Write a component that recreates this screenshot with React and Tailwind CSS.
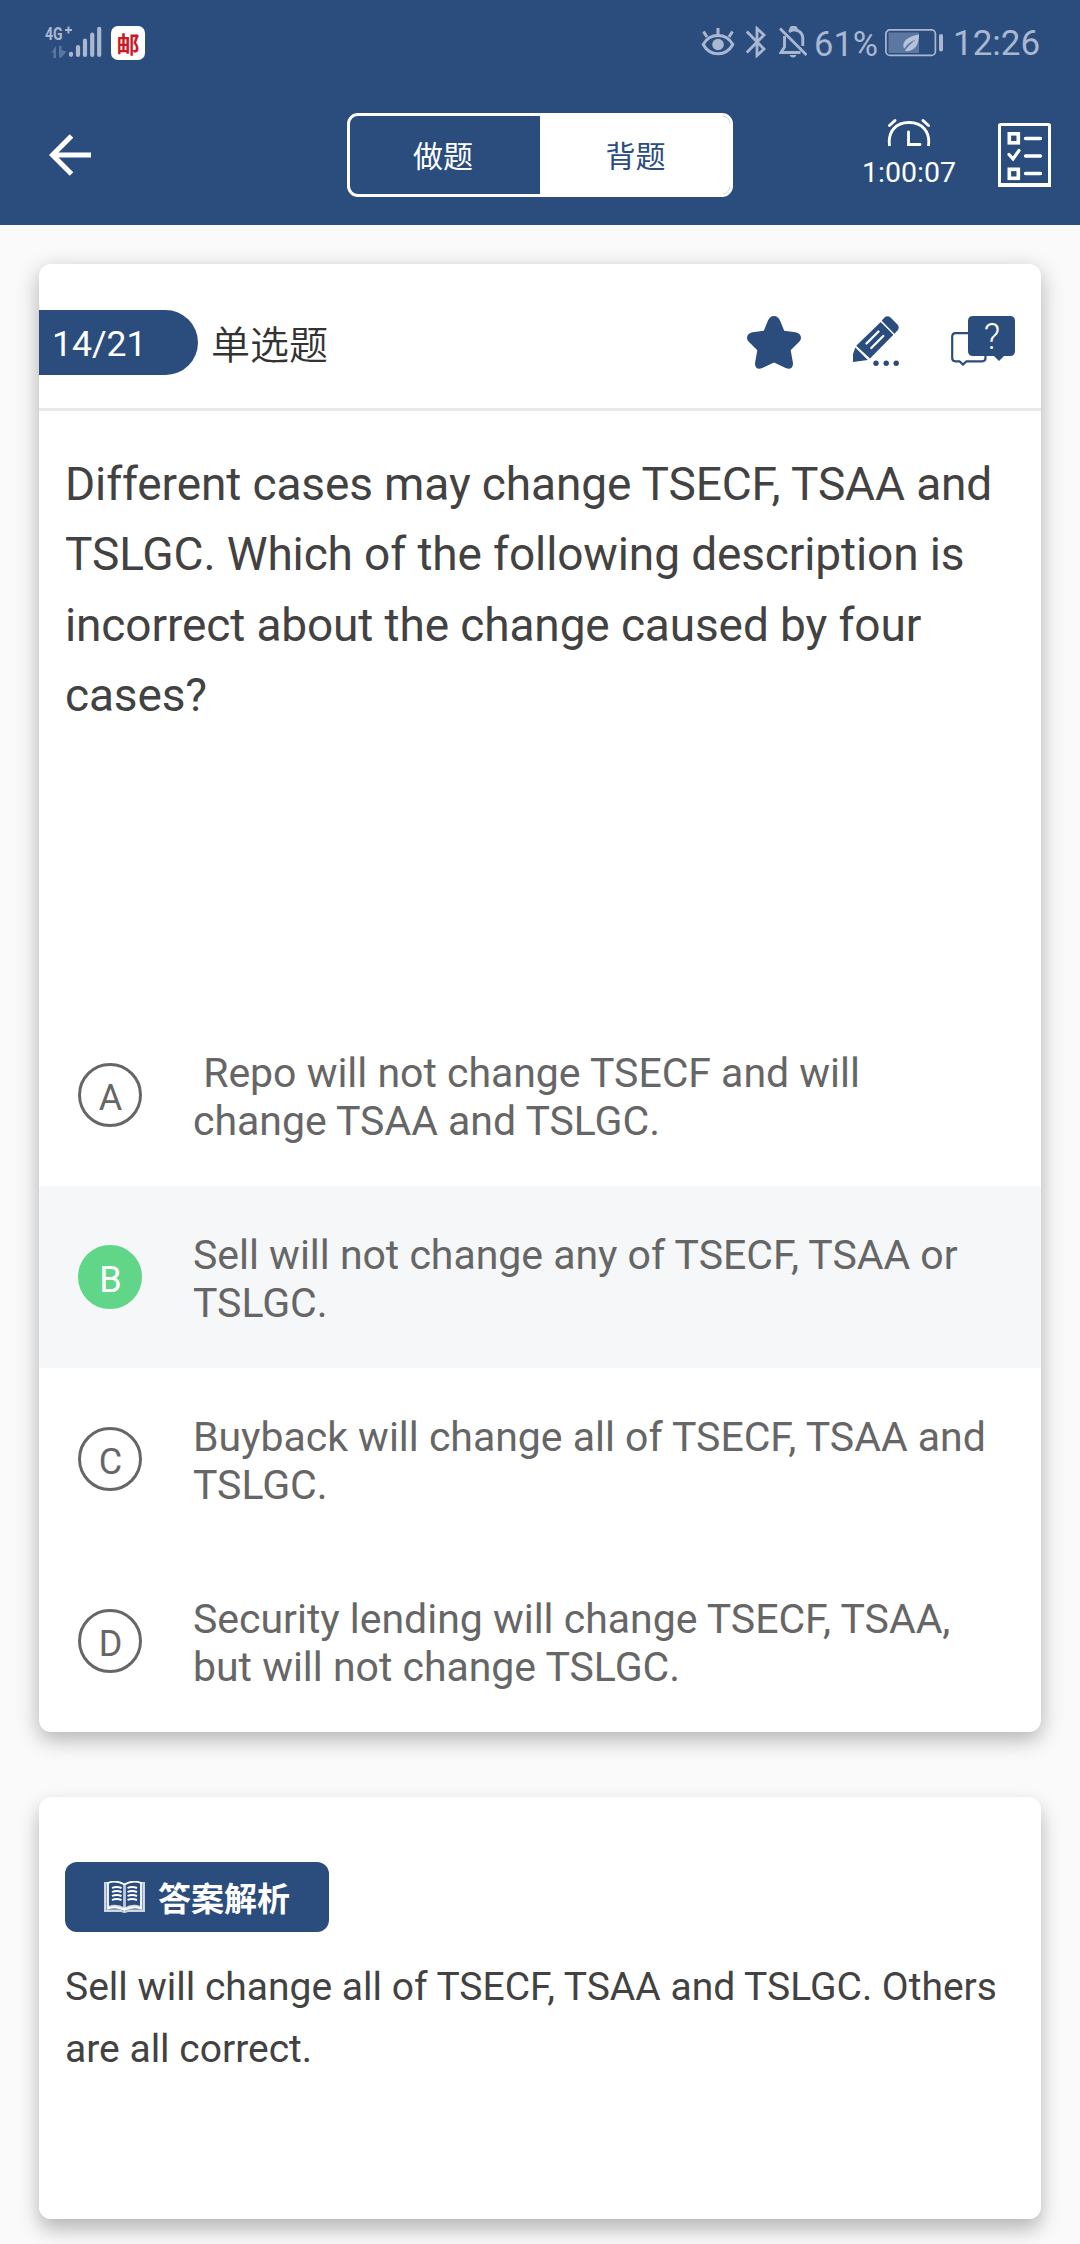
import React from "react";

const STATUS = "#a9b7d0";
const NAVY = "#2b4d7e";

const options = [
  { key: "A", lines: ["\u00a0Repo will not change TSECF and will", "change TSAA and TSLGC."] },
  { key: "B", lines: ["Sell will not change any of TSECF, TSAA or", "TSLGC."], selected: true },
  { key: "C", lines: ["Buyback will change all of TSECF, TSAA and", "TSLGC."] },
  { key: "D", lines: ["Security lending will change TSECF, TSAA,", "but will not change TSLGC."] },
];

function Lines({ lines }) {
  return lines.map((line) => (
    <span key={line} className="block whitespace-nowrap">{line}</span>
  ));
}

function Signal() {
  return (
    <div className="relative ml-[45px] mt-[26px] h-8 w-[57px] text-[#a9b7d0]">
      <span className="absolute left-0 -top-[3px] origin-left scale-x-[0.74] text-[19px] leading-[22px] font-bold">4G</span>
      <svg className="block" width="57" height="32" viewBox="0 0 57 32" fill="none">
        <path d="M20 4h7M23.500 .5v7" stroke={STATUS} strokeWidth="2" />
        <g stroke={STATUS} strokeWidth="4.200" strokeLinecap="round">
          <path d="M26 27.800v1M33 21v8M40 14.500V29M47.200 8.500V29M54.200 2.800V29" />
        </g>
        <path d="M5.800 27 11 20v12H8.500v-6zM14 20h2.500v4l5 1.500-5 6H14z" fill="#5a76a0" />
      </svg>
    </div>
  );
}

function Eye() {
  return (
    <svg width="34" height="32" viewBox="0 0 34 32" fill="none" stroke={STATUS}>
      <path d="M2.200 18.500C5.500 12.500 11 9.500 17 9.500s11.500 3 14.800 9c-3.300 6-8.800 9.300-14.800 9.300S5.500 24.500 2.200 18.500z" strokeWidth="3" />
      <circle cx="17" cy="18.500" r="5.800" fill={STATUS} stroke="none" />
      <path d="M17 2v7M2.500 5.500 6 11M31.500 5.500 28 11" strokeWidth="3" />
    </svg>
  );
}

function Bluetooth() {
  return (
    <svg width="20" height="32" viewBox="0 0 20 32" fill="none" stroke={STATUS} strokeWidth="2.800">
      <path d="M.8 5.500 18 23l-7 6.500V2.500L18 9 .8 26.500" />
    </svg>
  );
}

function BellOff() {
  return (
    <svg width="28" height="32" viewBox="0 0 28 32" fill="none" stroke={STATUS}>
      <path d="M5.500 10v11L2 26.500h19.500M10 5.800a8.500 8.500 0 0 1 13.800 6.200v8" strokeWidth="2.900" />
      <path d="M11.500 5.500V4a3 3 0 0 1 6 0v1.500" strokeWidth="2.900" />
      <path d="M1 2.500 27.500 29" strokeWidth="2.900" />
      <path d="M10.500 29h7q-1 2.500-3.500 2.500t-3.500-2.500z" fill={STATUS} stroke="none" />
    </svg>
  );
}

function Battery() {
  return (
    <svg width="58" height="28" viewBox="0 0 58 28" fill="none">
      <rect x=".9" y=".9" width="49.500" height="25.500" rx="4" stroke={STATUS} strokeWidth="1.700" />
      <rect x="3.500" y="3.500" width="30.500" height="20.500" fill="#5c77a1" />
      <rect x="54" y="5" width="4" height="17.500" rx="2" fill={STATUS} />
      <path d="M34 5.500C27 7 18.500 9 18.200 17.500l1.300 2C22 15 26 12.500 31 10.500 26.500 14 23 17 19.800 22c7 1 14.200-3 14.200-16.500z" fill="#b4c4d8" />
    </svg>
  );
}

function StatusBar() {
  return (
    <div className="flex h-[86px] items-start">
      <Signal />
      <div className="ml-[9px] mt-[26px] flex h-[34px] w-[34px] items-center justify-center rounded-[7px] bg-white">
        <span className="font-['Noto_Sans_CJK_SC'] text-[23px] leading-[22px] font-bold text-[#cc1827]">邮</span>
      </div>
      <div className="ml-[556px] mt-[26px] flex h-8">
        <Eye />
        <div className="ml-[11px]"><Bluetooth /></div>
        <div className="ml-[13px]"><BellOff /></div>
        <span className="ml-[7px] mt-[2px] w-[64px] whitespace-nowrap text-[34.500px] leading-8 text-[#a9b7d0]">61%</span>
        <div className="ml-[7px] mt-[3px]"><Battery /></div>
        <span className="ml-[10px] mt-[2px] whitespace-nowrap text-[35px] leading-8 text-[#a9b7d0]">12:26</span>
      </div>
    </div>
  );
}

function Toolbar() {
  return (
    <div className="flex items-start">
      <svg className="ml-[49px] mt-[48px] block" width="44" height="42" viewBox="0 0 44 42" fill="none" stroke="#fff" strokeWidth="5">
        <path d="M42 21H5M22.500 2 3.500 21l19 19" />
      </svg>
      <div className="ml-[254px] mt-[27px] flex h-[84px] w-[386px] overflow-hidden rounded-[11px] border-[3px] border-white font-['Noto_Sans_CJK_SC'] text-[30px] leading-[77px]">
        <div className="w-[190px] pr-[4px] text-center text-white">做题</div>
        <div className="flex-1 bg-white pl-px text-center text-[#2b4d7e]">背题</div>
      </div>
      <div className="ml-[126px] mt-[32px] flex w-[100px] flex-col items-center">
        <svg width="44" height="29" viewBox="0 0 44 29" fill="none" stroke="#fff" strokeLinecap="round">
          <path d="M2.600 28C.5 14 8.500 4.500 22 4.500S43.500 14 41.400 28" strokeWidth="2.800" strokeLinecap="butt" />
          <path d="M21.500 14v12.500h11.500" strokeWidth="2.800" />
          <path d="M2.500 7.500 8 2.500M41.500 7.500 36 2.500" strokeWidth="3" />
        </svg>
        <span className="mt-[9px] whitespace-nowrap text-[28.500px] leading-[34px] text-white">1:00:07</span>
      </div>
      <svg className="ml-[39px] mt-[37px] block" width="53" height="64" viewBox="0 0 53 64" fill="none" stroke="#fff">
        <rect x="1.500" y="1.500" width="50" height="61" rx="1" strokeWidth="3" />
        <path d="M0 62h53" strokeWidth="4" />
        <rect x="11.300" y="10.800" width="9" height="9" strokeWidth="3.600" />
        <rect x="11.300" y="46.300" width="9" height="9" strokeWidth="3.600" />
        <path d="m11 31.500 4 4.500 6-8.500" strokeWidth="3.200" strokeLinecap="round" />
        <path d="M27.500 15.500h15M27.500 33h15M27.500 50.500h15" strokeWidth="3.300" strokeLinecap="round" />
      </svg>
    </div>
  );
}

function CardHeader() {
  return (
    <div className="flex h-[147px] items-start border-b-[3px] border-[#e8e8e8]">
      <div className="mt-[46px] h-[65px] w-[159px] rounded-r-full bg-[#2b4d7e] pl-[13px] text-[35.500px] leading-[69px] text-white">14/21</div>
      <span className="ml-[13px] mt-[46px] w-[120px] whitespace-nowrap font-['Noto_Sans_CJK_SC'] text-[39px] leading-[65px] font-[350] text-[#333]">单选题</span>
      <svg className="ml-[416px] mt-[52px] block" width="54" height="53" viewBox="0 0 54 53" fill={NAVY}>
        <path d="M27 0c3 0 4.500 1.500 6 4.500l4.200 10.200 11.300 1.600c5.500 1 7.200 6 3.500 9.700l-8.300 8.200 2.200 12.300c.7 5-2.700 7.700-7.200 5.500L27 46.500 15.300 52c-4.500 2.200-7.900-.5-7.200-5.500l2.200-12.300L2 26c-3.700-3.700-2-8.700 3.500-9.700l11.300-1.600L21 4.500C22.500 1.500 24 0 27 0z" />
      </svg>
      <svg className="ml-[52px] mt-[52px] block" width="46" height="50" viewBox="0 0 46 50" fill={NAVY}>
        <path d="M28.700 4.800 31.500 1.500q3-2.500 6 0l7 7q2.500 3 0 6L41.400 17.700z" />
        <path d="M27.700 6 40.400 18.700 17 42.600 3.200 29.800z" />
        <path d="M2.300 31.400 14.800 44 0 46V38z" />
        <path d="m13.500 27.500 12-12M18.300 32l12-12" stroke="#fff" strokeWidth="2.300" strokeLinecap="round" />
        <circle cx="23" cy="47.300" r="2.700" /><circle cx="33.200" cy="47.300" r="2.700" /><circle cx="43.200" cy="47.300" r="2.700" />
      </svg>
      <div className="relative ml-[52px] mt-[52px] h-[50px] w-[64px]">
        <svg className="block" width="64" height="50" viewBox="0 0 64 50" fill="none">
          <path d="M17 17.200H4.500Q1.200 17.200 1.200 20.500V42q0 3.300 3.300 3.300H8.500l3.500 3.300 3.500-3.300H31q3.500 0 3.500-3.300V40" stroke={NAVY} strokeWidth="2.200" />
          <path d="M22 0h37q5 0 5 5v30q0 5-5 5h-6l-5 5-5-5H22q-5 0-5-5V5q0-5 5-5z" fill={NAVY} />
        </svg>
        <span className="absolute left-[17px] top-0 w-[48px] text-center text-[36px] leading-[42px] font-light text-white">?</span>
      </div>
    </div>
  );
}

function Option({ option }) {
  const badge = option.selected
    ? "border-[#61d688] bg-[#61d688] text-white"
    : "border-[#666] text-[#666]";
  return (
    <div className={option.selected ? "flex h-[182px] items-center bg-[#f5f7f9]" : "flex h-[182px] items-center"}>
      <div className={`ml-[39px] h-16 w-16 rounded-full border-[3px] pt-[3px] pl-px text-center text-[36px] leading-[58px] ${badge}`}>
        {option.key}
      </div>
      <p className="ml-[51px] pt-[3px] text-[41px] leading-[48px] tracking-[-0.020px] text-[#666]">
        <Lines lines={option.lines} />
      </p>
    </div>
  );
}

function BookIcon() {
  return (
    <svg width="41" height="32" viewBox="0 0 41 32" fill="none" stroke="#fff">
      <path d="M4 2H1v28h16q3.500 2 7 0h16V2h-3" strokeWidth="2" opacity=".75" />
      <path d="M2.500 3v25.500h36V3" strokeWidth="2" opacity=".45" />
      <path d="M20.500 3.500Q12-1.500 4 2v25.500q8.500-3 16.500 1.500 8-4.500 16.500-1.500V2Q29-1.500 20.500 3.500z" strokeWidth="1.800" />
      <path d="M20.500 3.500V29" strokeWidth="2.800" opacity=".7" />
      <path d="M5 26q8-3 15.500 2Q28 23 36 26" strokeWidth="2.200" opacity=".8" />
      <path d="M8 7q4.500-2 9.500 0M8 11q4.500-2 9.500 0M8 15q4.500-2 9.500 0M8 19q4.500-2 9.500 0M23.500 7q4.500-2 9.500 0M23.500 11q4.500-2 9.500 0M23.500 15q4.500-2 9.500 0M23.500 19q4.500-2 9.500 0" strokeWidth="1.900" />
    </svg>
  );
}

export default function App() {
  return (
    <div className="h-[2244px] w-[1080px] overflow-hidden bg-[#fafafa] font-['Roboto','Noto_Sans_CJK_SC',sans-serif]">
      <header className="h-[225px] bg-[#2b4d7e]">
        <StatusBar />
        <Toolbar />
      </header>

      <main className="px-[39px] pt-[39px]">
        <section className="flex h-[1468px] flex-col overflow-hidden rounded-[12px] bg-white shadow-[0_7px_22px_rgba(0,0,0,0.3)]">
          <CardHeader />
          <p className="h-[593px] pt-[37.500px] pl-[26px] text-[46px] leading-[70.600px] tracking-[-0.120px] text-[#424242]">
            <Lines
              lines={[
                "Different cases may change TSECF, TSAA and",
                "TSLGC. Which of the following description is",
                "incorrect about the change caused by four",
                "cases?",
              ]}
            />
          </p>
          <div>
            {options.map((option) => (
              <Option key={option.key} option={option} />
            ))}
          </div>
        </section>

        <section className="mt-[65px] h-[422px] rounded-[12px] bg-white pt-[65px] pl-[26px] shadow-[0_10px_20px_rgba(0,0,0,0.28)]">
          <div className="flex h-[70px] w-[264px] items-center rounded-[12px] bg-[#2b4d7e] pl-[39px] text-white">
            <BookIcon />
            <span className="ml-[13px] whitespace-nowrap font-['Noto_Sans_CJK_SC'] text-[33px] leading-[70px] font-bold">答案解析</span>
          </div>
          <p className="mt-[24px] text-[39px] leading-[62px] text-[#424242]">
            <Lines lines={["Sell will change all of TSECF, TSAA and TSLGC. Others", "are all correct."]} />
          </p>
        </section>
      </main>
    </div>
  );
}
